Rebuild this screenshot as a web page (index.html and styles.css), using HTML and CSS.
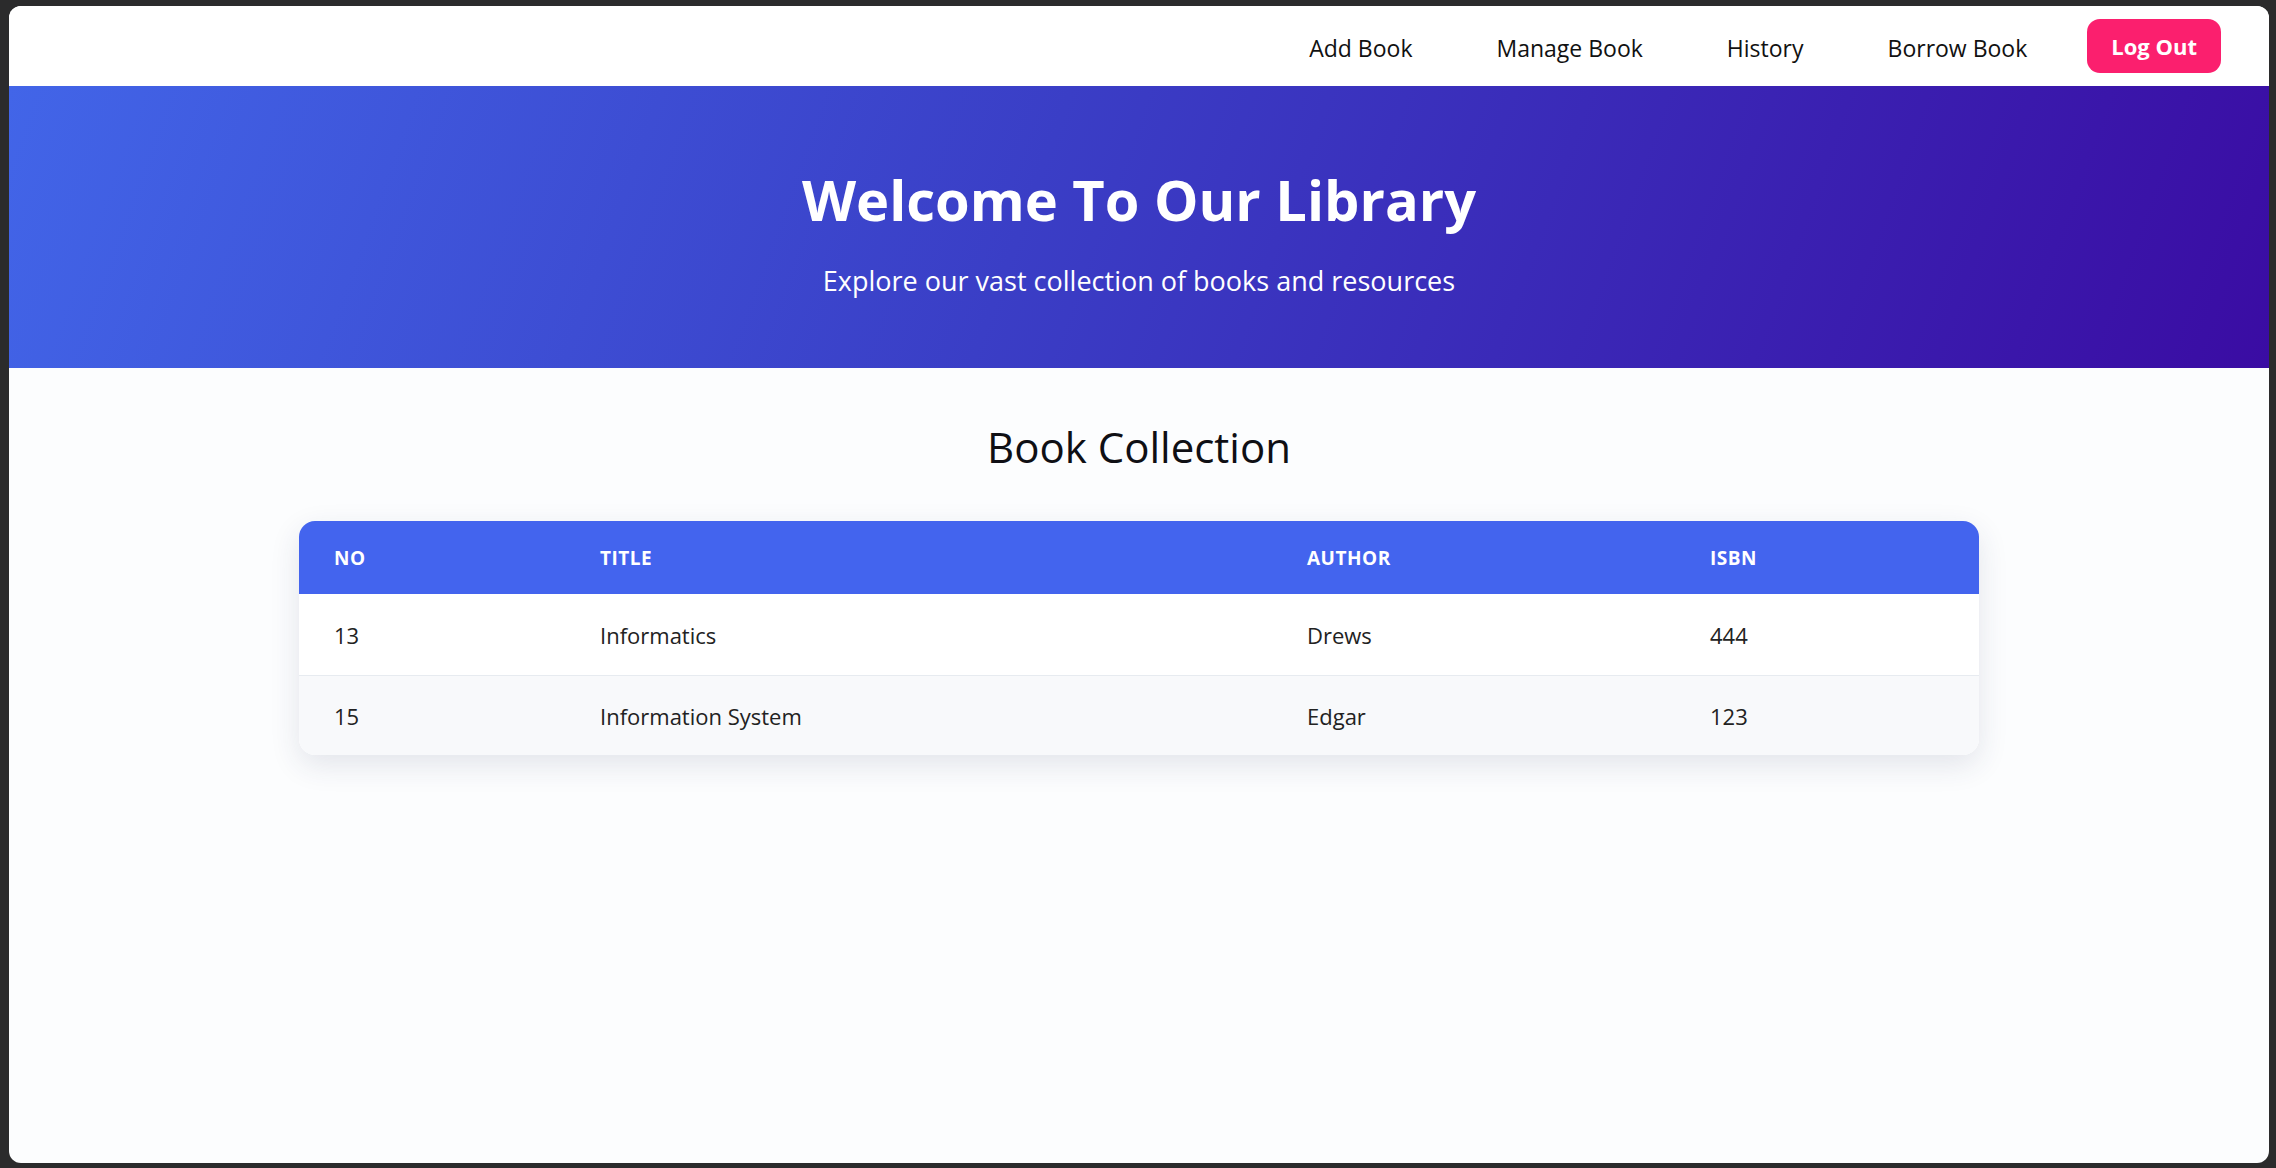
FILE: index.html
```html
<!DOCTYPE html>
<html lang="en">
<head>
<meta charset="utf-8">
<title>Library</title>
<link rel="stylesheet" href="styles.css">
</head>
<body>
<div class="window">
  <nav class="navbar">
    <a class="nav-link" href="#">Add Book</a>
    <a class="nav-link" href="#">Manage Book</a>
    <a class="nav-link" href="#">History</a>
    <a class="nav-link" href="#">Borrow Book</a>
    <a class="logout" href="#">Log Out</a>
  </nav>
  <header class="hero">
    <h1 class="hero-title">Welcome To Our Library</h1>
    <p class="hero-sub">Explore our vast collection of books and resources</p>
  </header>
  <main class="content">
    <h2 class="section-title">Book Collection</h2>
    <div class="table-card">
      <table class="books">
        <thead>
          <tr>
            <th class="col-no">No</th>
            <th class="col-title">Title</th>
            <th class="col-author">Author</th>
            <th class="col-isbn">ISBN</th>
          </tr>
        </thead>
        <tbody>
          <tr>
            <td>13</td>
            <td>Informatics</td>
            <td>Drews</td>
            <td>444</td>
          </tr>
          <tr class="alt">
            <td>15</td>
            <td>Information System</td>
            <td>Edgar</td>
            <td>123</td>
          </tr>
        </tbody>
      </table>
    </div>
  </main>
</div>
</body>
</html>
```
FILE: styles.css
```css
* { box-sizing: border-box; }
html, body { height: 100%; }
body {
  margin: 0;
  background: #2b2b2c;
  padding: 6px 7px 5px 9px;
  font-family: "Open Sans", "Noto Sans", sans-serif;
  color: #111;
}
.window {
  height: 100%;
  background: #fcfdfe;
  border-radius: 12px;
  overflow: hidden;
}
.navbar {
  height: 80px;
  background: #fff;
  display: flex;
  justify-content: flex-end;
  align-items: center;
  gap: 36px;
  padding: 0 48px;
}
.nav-link {
  color: #111;
  text-decoration: none;
  font-size: 23px;
  padding: 3px 24px 0;
}
.logout {
  background: #fb1f6e;
  color: #fff;
  text-decoration: none;
  font-weight: 700;
  font-size: 22px;
  height: 54px;
  display: flex;
  align-items: center;
  padding: 0 24px;
  border-radius: 13px;
}
.hero {
  height: 282px;
  background: linear-gradient(110deg, #4265e8 0%, #3a3ec6 45%, #3a0ca3 100%);
  color: #fff;
  text-align: center;
  display: flex;
  flex-direction: column;
  align-items: center;
  padding-top: 78px;
}
.hero-title {
  margin: 0;
  font-size: 56px;
  font-weight: 700;
  line-height: 70px;
}
.hero-sub {
  margin: 29px 0 0;
  font-size: 27px;
  line-height: 36px;
}
.content {
  padding-top: 53px;
}
.section-title {
  margin: 0 0 48px;
  text-align: center;
  font-size: 42px;
  font-weight: 400;
  line-height: 52px;
  color: #0f0f14;
}
.table-card {
  width: 1680px;
  margin: 0 auto;
  border-radius: 16px;
  overflow: hidden;
  background: #fff;
  box-shadow: 0 10px 30px rgba(40, 50, 90, 0.12);
}
.books {
  width: 100%;
  border-collapse: collapse;
  font-size: 22px;
}
.books th {
  background: #4364ee;
  color: #fff;
  text-transform: uppercase;
  text-align: left;
  font-size: 19px;
  font-weight: 700;
  height: 73px;
  padding: 0 35px;
  letter-spacing: 0.5px;
}
.col-no { width: 266px; }
.col-title { width: 707px; }
.col-author { width: 403px; }
.books td {
  height: 81px;
  padding: 2px 35px 0;
  color: #222;
  border-bottom: 1px solid #e7ebf0;
}
.books tr:last-child td { border-bottom: none; height: 80px; }
.books tr.alt td { background: #f8f9fb; }
```
